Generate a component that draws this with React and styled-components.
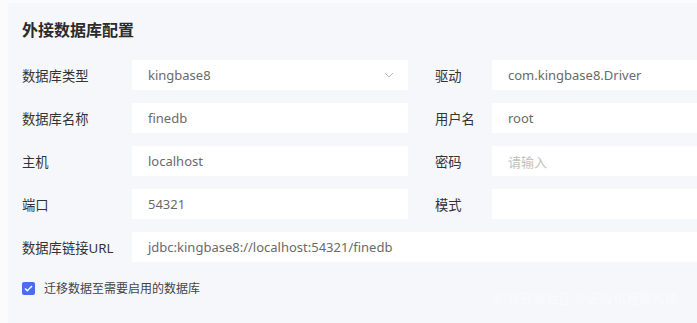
import React from 'react';
import styled, { createGlobalStyle } from 'styled-components';

const GlobalStyle = createGlobalStyle`
	body {
		margin: 0;
		background-color: #fbfbfd;
		font-family: "Noto Sans", "Noto Sans CJK SC", sans-serif;
		overflow: hidden;
	}
`;

const Panel = styled.div`
	position: relative;
	margin: 3px 0 0 8px;
	height: 320px;
	padding: 16px 0 0 14px;
	box-sizing: border-box;
	background-color: #f6f7fb;
	overflow: hidden;
`;

const Title = styled.h2`
	margin: 0;
	font-size: 16px;
	line-height: 22px;
	font-weight: 700;
	color: #2b2b2b;
`;

const Form = styled.div`
	display: grid;
	grid-template-columns: 110px 276px 84px 1fr;
	row-gap: 13px;
	margin-top: 19px;
`;

const Label = styled.div`
	height: 30px;
	display: flex;
	align-items: center;
	padding-left: ${(p) => (p.$right ? '27px' : '0')};
	font-size: 13.3px;
	color: #333;
	white-space: nowrap;
`;

const Field = styled.div`
	height: 30px;
	display: flex;
	align-items: center;
	justify-content: space-between;
	padding: 0 14px 0 16px;
	background-color: #fff;
	font-size: 13px;
	color: ${(p) => (p.$placeholder ? '#c0c0c0' : '#6a6a6a')};
	white-space: nowrap;
	grid-column: ${(p) => (p.$wide ? 'span 3' : 'auto')};
`;

const CheckRow = styled.label`
	display: flex;
	align-items: center;
	gap: 9px;
	margin-top: 17px;
	font-size: 12px;
	color: #444;
`;

const Box = styled.span`
	width: 13px;
	height: 13px;
	border-radius: 2px;
	background-color: #4a6cf0;
	display: flex;
	align-items: center;
	justify-content: center;
`;

const Watermark = styled.div`
	position: absolute;
	left: 486px;
	top: 285px;
	font-size: 13px;
	color: rgba(255, 255, 255, 0.45);
	white-space: nowrap;
`;

const Chevron = () => (
	<svg width="10" height="6" viewBox="0 0 10 6">
		<path d="M1 1l4 4 4-4" fill="none" stroke="#b8b8b8" strokeWidth="1" />
	</svg>
);

const rows = [
	['数据库类型', 'kingbase8', '驱动', 'com.kingbase8.Driver', true],
	['数据库名称', 'finedb', '用户名', 'root'],
	['主机', 'localhost', '密码', '请输入', false, true],
	['端口', '54321', '模式', ''],
];

const App = () => {
	return (
		<>
			<GlobalStyle />
			<Panel>
				<Title>外接数据库配置</Title>
				<Form>
					{rows.map(([l1, v1, l2, v2, select, ph]) => (
						<React.Fragment key={l1}>
							<Label>{l1}</Label>
							<Field>
								{v1}
								{select && <Chevron />}
							</Field>
							<Label $right>{l2}</Label>
							<Field $placeholder={ph}>{v2}</Field>
						</React.Fragment>
					))}
					<Label>数据库链接URL</Label>
					<Field $wide>jdbc:kingbase8://localhost:54321/finedb</Field>
				</Form>
				<CheckRow>
					<Box>
						<svg width="9" height="7" viewBox="0 0 9 7">
							<path d="M1 3.5l2.3 2.3L8 1" fill="none" stroke="#fff" strokeWidth="1.4" />
						</svg>
					</Box>
					迁移数据至需要启用的数据库
				</CheckRow>
				<Watermark>帆软开放社区 @正版化管理系统</Watermark>
			</Panel>
		</>
	);
};

export default App;
